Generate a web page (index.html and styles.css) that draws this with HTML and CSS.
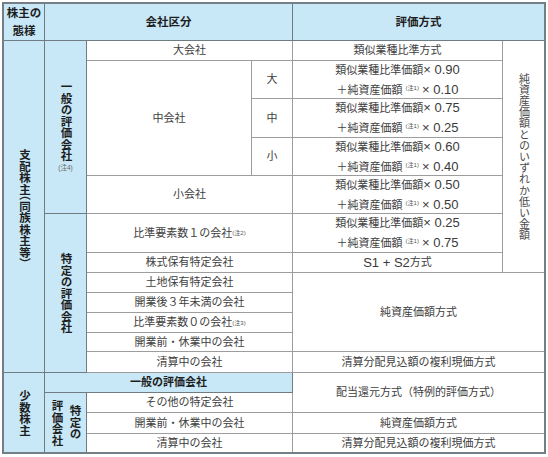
FILE: index.html
```html
<!DOCTYPE html>
<html lang="ja">
<head>
<meta charset="utf-8">
<title>評価方式</title>
<link rel="stylesheet" href="styles.css">
</head>
<body>
<div class="sheet">
  <div class="c b hd owner">株主の<br>態様</div>
  <div class="c b hd cs3">会社区分</div>
  <div class="c b hd cs2 nr">評価方式</div>

  <div class="c b rs12"><span class="v">支配株主<span class="hp">（</span>同族株主等<span class="hp">）</span></span></div>
  <div class="c b rs5 stack"><span class="v">一般の評価会社</span><span class="note4">(注4)</span></div>
  <div class="c cs2">大会社</div>
  <div class="c">類似業種比準方式</div>
  <div class="c rs7 nr"><span class="v lite">純資産価額とのいずれか低い金額</span></div>

  <div class="c rs3">中会社</div>
  <div class="c">大</div>
  <div class="c two"><div>類似業種比準価額<span class="n">× 0.90</span></div><div>＋純資産価額 <sup class="note">(注1)</sup> <span class="n">× 0.10</span></div></div>

  <div class="c">中</div>
  <div class="c two"><div>類似業種比準価額<span class="n">× 0.75</span></div><div>＋純資産価額 <sup class="note">(注1)</sup> <span class="n">× 0.25</span></div></div>

  <div class="c">小</div>
  <div class="c two"><div>類似業種比準価額<span class="n">× 0.60</span></div><div>＋純資産価額 <sup class="note">(注1)</sup> <span class="n">× 0.40</span></div></div>

  <div class="c cs2">小会社</div>
  <div class="c two"><div>類似業種比準価額<span class="n">× 0.50</span></div><div>＋純資産価額 <sup class="note">(注1)</sup> <span class="n">× 0.50</span></div></div>

  <div class="c b rs7"><span class="v">特定の評価会社</span></div>
  <div class="c cs2">比準要素数１の会社 <sup class="note">(注2)</sup></div>
  <div class="c two"><div>類似業種比準価額<span class="n">× 0.25</span></div><div>＋純資産価額 <sup class="note">(注1)</sup> <span class="n">× 0.75</span></div></div>

  <div class="c cs2">株式保有特定会社</div>
  <div class="c"><span class="n">S1 + S2 </span>方式</div>

  <div class="c cs2">土地保有特定会社</div>
  <div class="c cs2 rs4 nr">純資産価額方式</div>
  <div class="c cs2">開業後３年未満の会社</div>
  <div class="c cs2">比準要素数０の会社 <sup class="note">(注3)</sup></div>
  <div class="c cs2">開業前・休業中の会社</div>

  <div class="c cs2">清算中の会社</div>
  <div class="c cs2 nr">清算分配見込額の複利現価方式</div>

  <div class="c b rs4 nb"><span class="v">少数株主</span></div>
  <div class="c b cs3">一般の評価会社</div>
  <div class="c cs2 rs2 nr">配当還元方式（特例的評価方式）</div>

  <div class="c b rs3 nb"><span class="v two-v">特定の<br>評価会社</span></div>
  <div class="c cs2">その他の特定会社</div>

  <div class="c cs2">開業前・休業中の会社</div>
  <div class="c cs2 nr">純資産価額方式</div>

  <div class="c cs2 nb">清算中の会社</div>
  <div class="c cs2 nr nb">清算分配見込額の複利現価方式</div>
</div>
</body>
</html>
```

FILE: styles.css
```css
html, body {
  margin: 0;
  background: #ffffff;
}

.sheet {
  display: grid;
  grid-template-columns: 41px 42px 165px 41px 210px 41px;
  grid-template-rows: 37px 20px 38px 39px 38px 38px 39px 20px 20px 20px 20px 19px 21px 20px 20px 21px 18px;
  width: max-content;
  margin: 2px 0 0 2px;
  border: 2px solid #737f84;
  font-family: "Liberation Sans", "Noto Sans CJK JP", sans-serif;
  font-size: 11px;
  color: #404040;
}

.c {
  display: flex;
  align-items: center;
  justify-content: center;
  text-align: center;
  white-space: nowrap;
  border-right: 1px solid #9d9d9d;
  border-bottom: 1px solid #9d9d9d;
  line-height: 19px;
}

.b {
  background: #c8e8f7;
  border-right-color: #6f7c82;
  border-bottom-color: #6f7c82;
  font-weight: 700;
  color: #1e1e1e;
}

.nr { border-right: 0; }
.nb { border-bottom: 0; }

.cs2 { grid-column: span 2; }
.cs3 { grid-column: span 3; }
.rs2 { grid-row: span 2; }
.rs3 { grid-row: span 3; }
.rs4 { grid-row: span 4; }
.rs5 { grid-row: span 5; }
.rs7 { grid-row: span 7; }
.rs12 { grid-row: span 12; }

.hd {
  font-size: 11.5px;
}

.owner {
  line-height: 18px;
}

.two {
  flex-direction: column;
}

.stack {
  flex-direction: column;
}

.v {
  writing-mode: vertical-rl;
  font-size: 11.5px;
  line-height: 18px;
}

.v.lite {
  font-weight: 400;
  font-size: 11px;
  letter-spacing: 0.2px;
  color: #4a4a4a;
}

.hp {
  font-feature-settings: "vhal";
}

.two-v {
  text-align: center;
}

.n {
  font-size: 13px;
  color: #3a3a3a;
}

.note {
  font-size: 6px;
  font-weight: 400;
  vertical-align: 4px;
  line-height: 0;
  color: #555555;
}

.note4 {
  font-size: 6.5px;
  font-weight: 400;
  color: #666666;
  line-height: 10px;
  margin-top: 2px;
}
```
